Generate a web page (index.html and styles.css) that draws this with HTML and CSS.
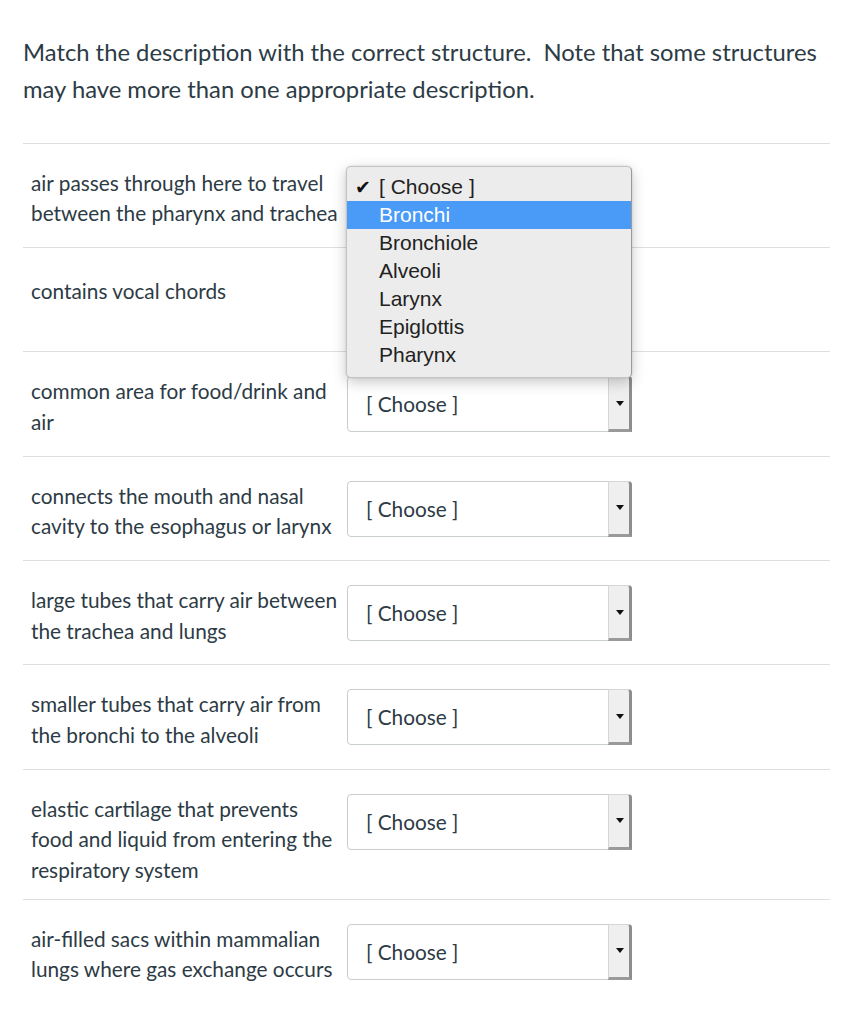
FILE: index.html
```html
<!DOCTYPE html>
<html lang="en">
<head>
<meta charset="utf-8">
<title>Matching question</title>
<link rel="stylesheet" href="styles.css">
</head>
<body>
<div class="page">
  <p class="prompt">Match the description with the correct structure.&nbsp; Note that some structures may have more than one appropriate description.</p>
  <div class="list">
    <div class="row">
      <div class="desc">air passes through here to travel between the pharynx and trachea</div>
      <div class="sel anchor">
        <span class="val">[ Choose ]</span><span class="btn"><span class="tri"></span></span>
        <div class="popup">
          <div class="opt"><span class="check">✔</span>[ Choose ]</div>
          <div class="opt hl">Bronchi</div>
          <div class="opt">Bronchiole</div>
          <div class="opt">Alveoli</div>
          <div class="opt">Larynx</div>
          <div class="opt">Epiglottis</div>
          <div class="opt">Pharynx</div>
        </div>
      </div>
    </div>
    <div class="row">
      <div class="desc single">contains vocal chords</div>
      <div class="sel"><span class="val">[ Choose ]</span><span class="btn"><span class="tri"></span></span></div>
    </div>
    <div class="row">
      <div class="desc">common area for food/drink and air</div>
      <div class="sel"><span class="val">[ Choose ]</span><span class="btn"><span class="tri"></span></span></div>
    </div>
    <div class="row">
      <div class="desc">connects the mouth and nasal cavity to the esophagus or larynx</div>
      <div class="sel"><span class="val">[ Choose ]</span><span class="btn"><span class="tri"></span></span></div>
    </div>
    <div class="row">
      <div class="desc">large tubes that carry air between the trachea and lungs</div>
      <div class="sel"><span class="val">[ Choose ]</span><span class="btn"><span class="tri"></span></span></div>
    </div>
    <div class="row">
      <div class="desc">smaller tubes that carry air from the bronchi to the alveoli</div>
      <div class="sel"><span class="val">[ Choose ]</span><span class="btn"><span class="tri"></span></span></div>
    </div>
    <div class="row">
      <div class="desc">elastic cartilage that prevents food and liquid from entering the respiratory system</div>
      <div class="sel"><span class="val">[ Choose ]</span><span class="btn"><span class="tri"></span></span></div>
    </div>
    <div class="row">
      <div class="desc">air-filled sacs within mammalian lungs where gas exchange occurs</div>
      <div class="sel"><span class="val">[ Choose ]</span><span class="btn"><span class="tri"></span></span></div>
    </div>
  </div>
</div>
</body>
</html>
```

FILE: styles.css
```css
html, body {
  margin: 0;
  padding: 0;
  background: #fff;
}
body {
  font-family: Lato, "Open Sans", sans-serif;
  color: #2d3b45;
}
.page {
  padding: 34px 16px 0 23px;
}
.prompt {
  margin: 0 0 34px 0;
  font-size: 23.8px;
  line-height: 37.4px;
}
.list {
  display: flex;
  flex-direction: column;
}
.row {
  display: flex;
  align-items: flex-start;
  border-top: 1px solid #dcdfe1;
  padding: 24px 0 13.3px 8px;
}
.desc {
  width: 310px;
  padding-right: 6px;
  font-size: 20.8px;
  line-height: 30.6px;
}
.desc.single {
  padding-top: 4px;
}
.sel {
  box-sizing: border-box;
  width: 285px;
  height: 56px;
  margin-bottom: 10px;
  border: 1px solid #c8cdd0;
  border-radius: 4px;
  background: #fff;
  display: flex;
  align-items: stretch;
}
.val {
  flex: 1;
  padding-left: 18px;
  font-size: 20.8px;
  line-height: 54px;
}
.btn {
  box-sizing: border-box;
  width: 24px;
  margin: -1px -1px -1px 0;
  background: #efefef;
  border-left: 1px solid #d6d6d6;
  border-right: 3px solid #8d8d8d;
  border-bottom: 3px solid #9a9a9a;
  border-top: 1px solid #d6d6d6;
  border-top-right-radius: 4px;
  display: flex;
  align-items: center;
  justify-content: center;
}
.tri {
  width: 0;
  height: 0;
  border-left: 4px solid transparent;
  border-right: 4px solid transparent;
  border-top: 5px solid #111;
  margin-left: 1px;
}
.anchor {
  position: relative;
}
.popup {
  position: absolute;
  left: -2px;
  top: -3px;
  width: 286px;
  box-sizing: border-box;
  padding: 6px 0 8px 0;
  background: #ececec;
  border: 1px solid #c4c4c4;
  border-right-color: #9a9a9a;
  border-radius: 5px;
  box-shadow: 0 4px 14px rgba(0, 0, 0, 0.22), 0 0 2px rgba(0, 0, 0, 0.15);
  font-family: "Liberation Sans", Arial, sans-serif;
  font-size: 21px;
  color: #222;
  z-index: 5;
}
.opt {
  height: 28px;
  line-height: 28px;
  padding-left: 32px;
  position: relative;
}
.opt.hl {
  background: #4a9af8;
  color: #fff;
}
.check {
  position: absolute;
  left: 8px;
  top: 0;
  font-family: "DejaVu Sans", sans-serif;
  font-size: 19px;
  color: #111;
}
```
